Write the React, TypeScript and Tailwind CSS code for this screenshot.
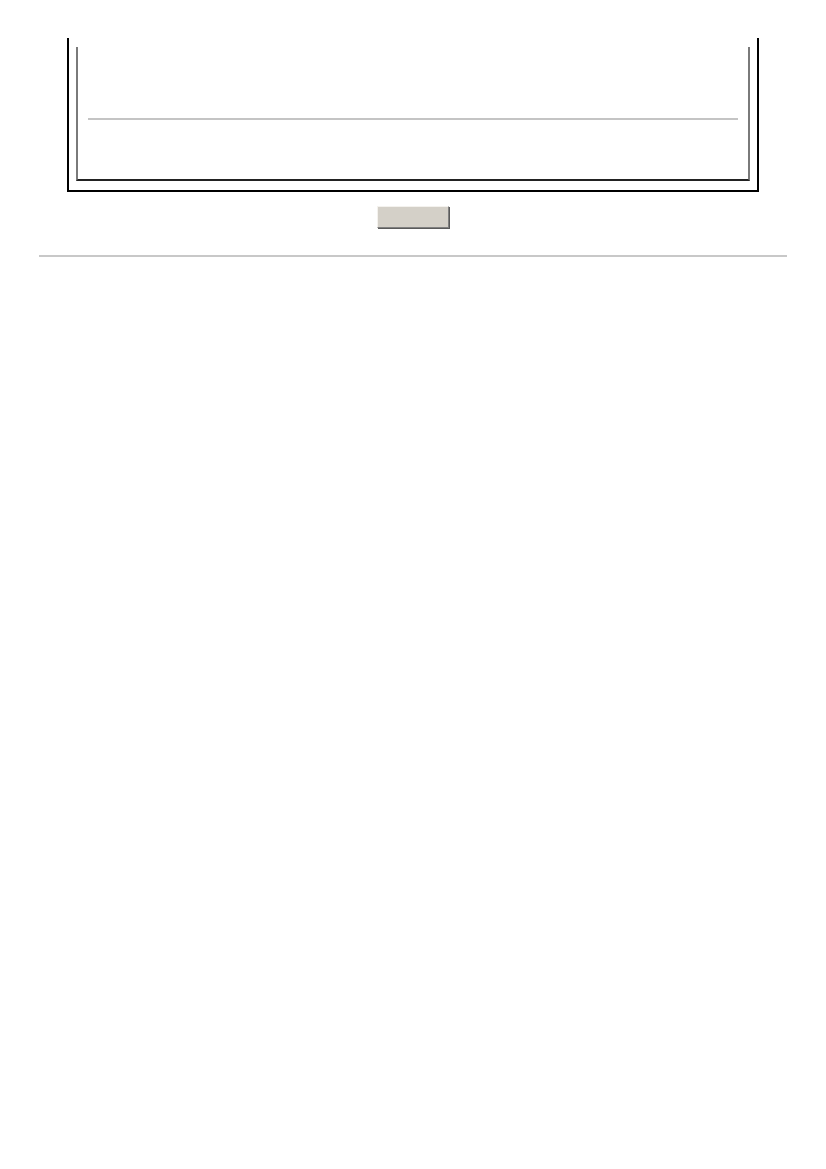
export default function App() {
  return (
    <div className="min-h-[1169px] bg-white font-['Liberation_Sans',Arial,sans-serif] text-[13px] text-black">
      {/* framed panel, top edge scrolled out of view */}
      <div className="pt-[38px]">
        <div className="mx-auto w-[692px] border-x-2 border-b-2 border-x-black border-b-black px-[7px] pb-[9px] pt-[9px]">
          <div className="flex h-[134px] flex-col border-x-2 border-b-2 border-l-[#7a7a7a] border-r-[#7a7a7a] border-b-[#222] px-[10px]">
            <div className="h-[71px]" />
            <div className="h-[2px] bg-[#c4c4c4]" />
          </div>
        </div>
      </div>

      <div className="flex justify-center pt-[14px]">
        <button
          type="button"
          className="h-[22px] w-[72px] border border-t-[#f4f2ee] border-l-[#f4f2ee] border-b-[#808080] border-r-[#808080] bg-[#d4d0c8] shadow-[1px_1px_0_#5a5a5a]"
        />
      </div>

      <div className="px-[39px] pt-[27px]">
        <div className="h-[2px] bg-[#c8c8c8]" />
      </div>
    </div>
  );
}
